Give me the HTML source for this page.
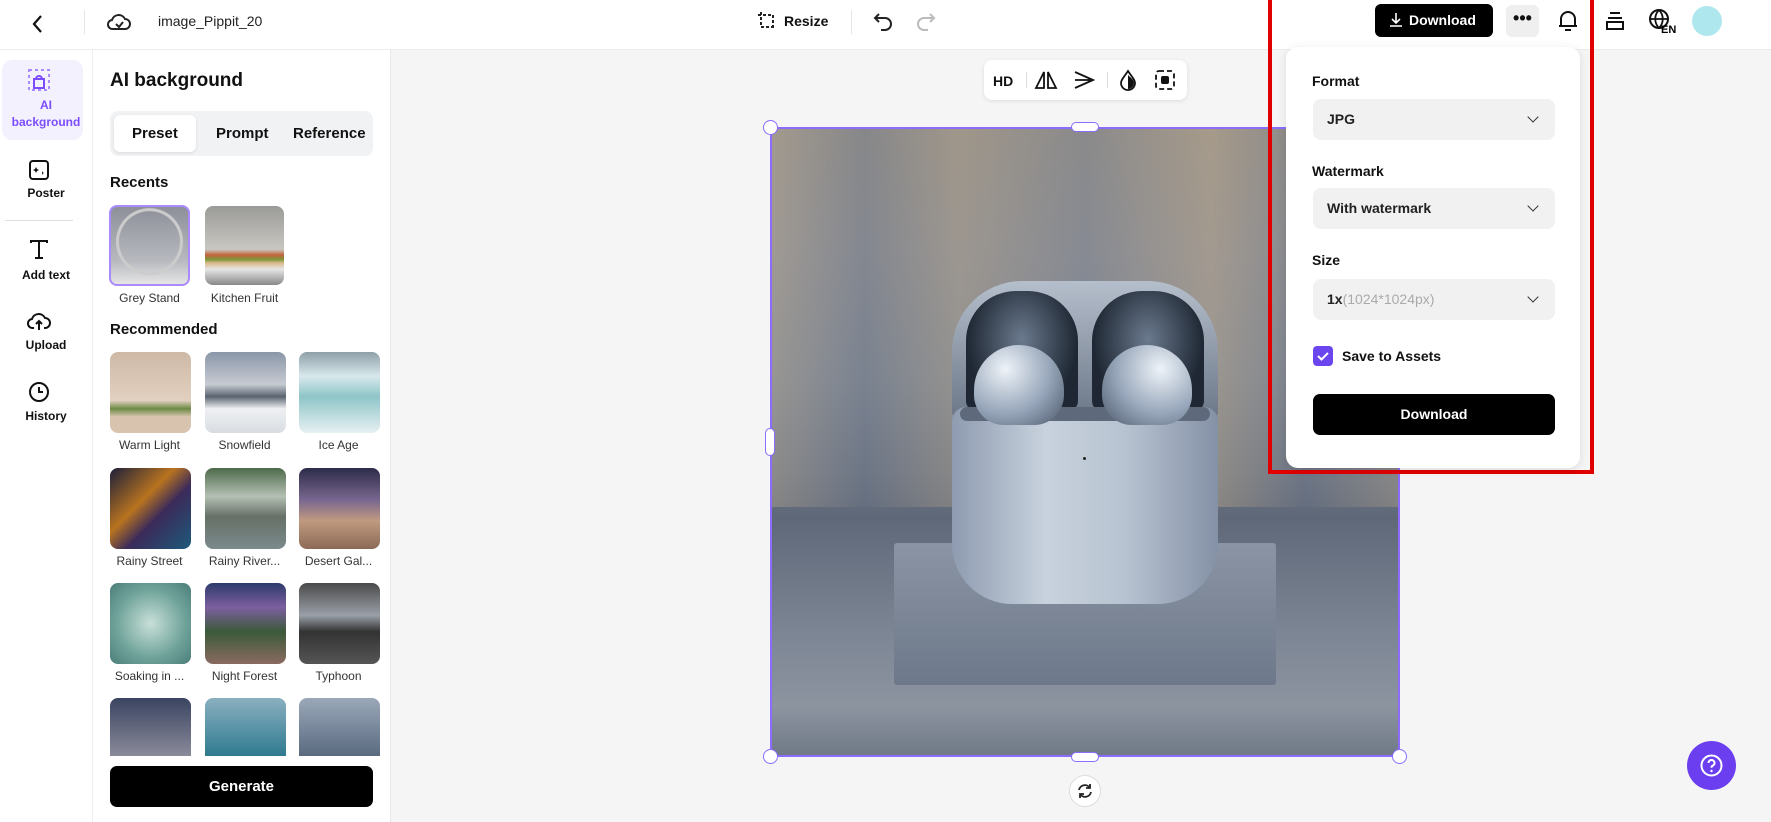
<!DOCTYPE html>
<html><head><meta charset="utf-8"><style>
*{box-sizing:border-box;margin:0;padding:0}
body{width:1771px;height:822px;overflow:hidden;background:#f5f5f5;font-family:"Liberation Sans",Arial,sans-serif;color:#111;position:relative}
.abs{position:absolute}
.top{left:0;top:0;width:1771px;height:50px;background:#fff;border-bottom:1px solid #ececec}
.nav{left:0;top:50px;width:92px;height:772px;background:#fff}
.panel{left:92px;top:50px;width:299px;height:772px;background:#fff;border-left:1px solid #eee;border-right:1px solid #e8e8e8}
.navitem{position:absolute;left:0;width:92px;text-align:center;font-size:12px;font-weight:bold}
.th{position:absolute;width:81px;height:81px;border-radius:8px}
.lbl{position:absolute;width:95px;text-align:center;font-size:12px;color:#333}
.sel{position:absolute;left:1313px;width:242px;height:41px;background:#f1f1f1;border-radius:8px;font-size:14px;padding:12px 14px;font-weight:bold;color:#222}
.sel:after{content:"";position:absolute;right:18px;top:14px;width:7px;height:7px;border-right:1.6px solid #333;border-bottom:1.6px solid #333;transform:rotate(45deg)}
.flab{position:absolute;left:1312px;font-size:14px;font-weight:bold}
</style></head><body>
<div class="abs top"></div>
<svg class="abs" style="left:28px;top:12px" width="20" height="24"><path d="M13 4 L6 12 L13 20" fill="none" stroke="#111" stroke-width="2.2"/></svg>
<div class="abs" style="left:84px;top:10px;width:1px;height:24px;background:#e5e5e5"></div>
<svg class="abs" style="left:106px;top:10px" width="26" height="24"><path d="M7 19 h12 a5 5 0 0 0 0-10 a7 7 0 0 0-13 1 a4.5 4.5 0 0 0 1 9z" fill="none" stroke="#222" stroke-width="2"/><path d="M10 14 l3 3 l4-5" fill="none" stroke="#222" stroke-width="2"/></svg>
<div class="abs" style="left:158px;top:13px;font-size:14px;color:#222">image_Pippit_20</div>
<svg class="abs" style="left:756px;top:10px" width="22" height="22"><path d="M5 2v15h15M2 5h15v15" fill="none" stroke="#222" stroke-width="2" stroke-dasharray="3 2"/></svg>
<div class="abs" style="left:784px;top:13px;font-size:14px;font-weight:bold">Resize</div>
<div class="abs" style="left:851px;top:10px;width:1px;height:24px;background:#e5e5e5"></div>
<svg class="abs" style="left:873px;top:10px" width="22" height="22"><path d="M6 4 L2 8 L6 12 M2 8 h10 a6 6 0 0 1 0 12 h-4" fill="none" stroke="#222" stroke-width="2"/></svg>
<svg class="abs" style="left:914px;top:10px" width="22" height="22"><path d="M16 4 L20 8 L16 12 M20 8 h-10 a6 6 0 0 0 0 12 h4" fill="none" stroke="#bbb" stroke-width="2"/></svg>
<div class="abs" style="left:1375px;top:4px;width:118px;height:33px;background:#000;border-radius:6px;color:#fff;font-size:14px;font-weight:bold;padding:8px 0 0 34px">Download</div>
<svg class="abs" style="left:1388px;top:11px" width="16" height="18"><path d="M8 2v10M4 8l4 4 4-4M2 15h12" fill="none" stroke="#fff" stroke-width="1.6"/></svg>
<div class="abs" style="left:1506px;top:5px;width:33px;height:32px;background:#efefef;border-radius:6px;font-size:18px;font-weight:bold;text-align:center;line-height:26px">•••</div>
<svg class="abs" style="left:1556px;top:8px" width="24" height="26"><path d="M5 18 V11 a7 7 0 0 1 14 0 V18 H3 h18 M9 22 h6" fill="none" stroke="#111" stroke-width="2"/></svg>
<svg class="abs" style="left:1604px;top:10px" width="22" height="22"><path d="M6 3h10M4 8h14M3 12h16v7H3z" fill="none" stroke="#111" stroke-width="2"/></svg>
<svg class="abs" style="left:1648px;top:8px" width="34" height="26"><circle cx="11" cy="11" r="9" fill="none" stroke="#111" stroke-width="2"/><path d="M2 11h18M11 2c-5 5-5 13 0 18M11 2c5 5 5 13 0 18" fill="none" stroke="#111" stroke-width="1.8"/><text x="13" y="25" font-size="11" font-weight="bold" font-family="Liberation Sans">EN</text></svg>
<div class="abs" style="left:1692px;top:6px;width:30px;height:30px;border-radius:50%;background:#aee8ee"></div>

<div class="abs nav"></div>
<div class="abs" style="left:2px;top:60px;width:81px;height:80px;background:#f4f1ff;border-radius:10px"></div>
<svg class="abs" style="left:27px;top:68px" width="24" height="24"><rect x="2" y="2" width="20" height="20" fill="none" stroke="#a98bff" stroke-width="2" stroke-dasharray="3 3"/><path d="M7 20 V11 h10 v9z M9 11 a3 3 0 0 1 6 0" fill="none" stroke="#7c4dff" stroke-width="2"/></svg>
<div class="navitem" style="top:97px;color:#7c4dff;line-height:17px">AI<br>background</div>
<svg class="abs" style="left:27px;top:158px" width="24" height="24"><rect x="3" y="3" width="18" height="18" rx="3" fill="none" stroke="#111" stroke-width="2"/><path d="M9 9l1 2 2 1-2 1-1 2-1-2-2-1 2-1z M15 13l.7 1.3 1.3.7-1.3.7-.7 1.3" fill="#111"/></svg>
<div class="navitem" style="top:186px">Poster</div>
<div class="abs" style="left:5px;top:220px;width:68px;height:1px;background:#ddd"></div>
<svg class="abs" style="left:28px;top:238px" width="22" height="22"><path d="M3 5V3h16v2M11 3v17M7 20h8" fill="none" stroke="#111" stroke-width="2"/></svg>
<div class="navitem" style="top:268px">Add text</div>
<svg class="abs" style="left:26px;top:309px" width="26" height="24"><path d="M8 19 h-1 a4.5 4.5 0 0 1-1-9 a7 7 0 0 1 13-1 a5 5 0 0 1 0 10 h-1 M13 21 v-9 M10 15l3-3 3 3" fill="none" stroke="#111" stroke-width="2"/></svg>
<div class="navitem" style="top:338px">Upload</div>
<svg class="abs" style="left:27px;top:380px" width="24" height="24"><circle cx="12" cy="12" r="9" fill="none" stroke="#111" stroke-width="2"/><path d="M12 7v5h4" fill="none" stroke="#111" stroke-width="2"/></svg>
<div class="navitem" style="top:409px">History</div>

<div class="abs panel"></div>
<div class="abs" style="left:110px;top:70px;font-size:19px;font-weight:bold">AI background</div>
<div class="abs" style="left:110px;top:111px;width:263px;height:45px;background:#f1f2f4;border-radius:8px"></div>
<div class="abs" style="left:114px;top:115px;width:82px;height:37px;background:#fff;border-radius:6px;box-shadow:0 1px 3px rgba(0,0,0,.1)"></div>
<div class="abs" style="left:132px;top:125px;font-size:15px;font-weight:bold">Preset</div>
<div class="abs" style="left:216px;top:125px;font-size:15px;font-weight:bold">Prompt</div>
<div class="abs" style="left:293px;top:125px;font-size:15px;font-weight:bold">Reference</div>
<div class="abs" style="left:110px;top:174px;font-size:15px;font-weight:bold">Recents</div>
<div class="th" style="left:109px;top:205px;border:2px solid #a98bff;background:radial-gradient(circle at 50% 45%,transparent 30px,#ccc 31px,#ccc 33px,transparent 34px),linear-gradient(#8d9099,#b7b9bf 70%,#e5e5e5)"></div>
<div class="th" style="left:205px;top:206px;width:79px;height:79px;background:linear-gradient(#9a9a98 0,#c9c7c1 55%,#c0643a 62%,#7a9a3a 68%,#d9b98c 72%,#e6e6e6 80%,#888)"></div>
<div class="lbl" style="left:102px;top:291px">Grey Stand</div>
<div class="lbl" style="left:197px;top:291px">Kitchen Fruit</div>
<div class="abs" style="left:110px;top:321px;font-size:15px;font-weight:bold">Recommended</div>

<div class="th" style="left:110px;top:352px;background:linear-gradient(#cdb9a6,#e2d0c0 60%,#6c8a45 70%,#d8c4ae 80%)"></div>
<div class="th" style="left:205px;top:352px;background:linear-gradient(#8a96a8,#c7cbd2 40%,#5a6470 55%,#eef0f2 70%,#d9dde2)"></div>
<div class="th" style="left:299px;top:352px;background:linear-gradient(#8fa0a8,#d8e8ec 30%,#8ec5c8 55%,#e8f0f2)"></div>
<div class="lbl" style="left:102px;top:438px">Warm Light</div>
<div class="lbl" style="left:197px;top:438px">Snowfield</div>
<div class="lbl" style="left:291px;top:438px">Ice Age</div>

<div class="th" style="left:110px;top:468px;background:linear-gradient(135deg,#1b1f3a,#b8731f 40%,#3b2a5a 60%,#1d5a7a)"></div>
<div class="th" style="left:205px;top:468px;background:linear-gradient(#4d6a4a,#b5c0b5 35%,#667066 60%,#7b8a8c)"></div>
<div class="th" style="left:299px;top:468px;background:linear-gradient(#2d2b4a,#7a6890 40%,#c09a80 65%,#8b6a55)"></div>
<div class="lbl" style="left:102px;top:554px">Rainy Street</div>
<div class="lbl" style="left:197px;top:554px">Rainy River...</div>
<div class="lbl" style="left:291px;top:554px">Desert Gal...</div>

<div class="th" style="left:110px;top:583px;background:radial-gradient(circle,#c8e0d8,#6fa39a 60%,#4a7d78)"></div>
<div class="th" style="left:205px;top:583px;background:linear-gradient(#2d3a6a,#7c5fa0 30%,#3b5a3a 60%,#8a6a60)"></div>
<div class="th" style="left:299px;top:583px;background:linear-gradient(#4a4a4a,#9aa0a8 40%,#333 60%,#555)"></div>
<div class="lbl" style="left:102px;top:669px">Soaking in ...</div>
<div class="lbl" style="left:197px;top:669px">Night Forest</div>
<div class="lbl" style="left:291px;top:669px">Typhoon</div>

<div class="th" style="left:110px;top:698px;height:58px;border-radius:8px 8px 0 0;background:linear-gradient(#3a4460,#8a8a9a)"></div>
<div class="th" style="left:205px;top:698px;height:58px;border-radius:8px 8px 0 0;background:linear-gradient(#8ab0c0,#2f7a90)"></div>
<div class="th" style="left:299px;top:698px;height:58px;border-radius:8px 8px 0 0;background:linear-gradient(#9aa8b8,#5a6a80)"></div>
<div class="abs" style="left:110px;top:766px;width:263px;height:41px;background:#000;border-radius:7px;color:#fff;font-size:15px;font-weight:bold;text-align:center;line-height:41px">Generate</div>

<!-- canvas toolbar -->
<div class="abs" style="left:984px;top:60px;width:203px;height:40px;background:#fff;border-radius:8px;box-shadow:0 1px 5px rgba(0,0,0,.1)"></div>
<div class="abs" style="left:993px;top:73px;font-size:14px;font-weight:bold">HD</div>
<div class="abs" style="left:1026px;top:72px;width:1px;height:16px;background:#ddd"></div>
<svg class="abs" style="left:1034px;top:70px" width="24" height="20"><path d="M10 2 L2 18 H10z M14 2 L22 18 H14z" fill="none" stroke="#111" stroke-width="1.8"/></svg>
<svg class="abs" style="left:1073px;top:70px" width="22" height="20"><path d="M2 2 L20 10 L2 18 M2 10 H20" fill="none" stroke="#111" stroke-width="1.8"/></svg>
<div class="abs" style="left:1107px;top:72px;width:1px;height:16px;background:#ddd"></div>
<svg class="abs" style="left:1117px;top:69px" width="22" height="22"><path d="M11 2 C7 8 4 11 4 14 a7 7 0 0 0 14 0 C18 11 15 8 11 2z" fill="none" stroke="#111" stroke-width="1.8"/><path d="M11 6 V20 a6 6 0 0 0 6-6 C17 11 14 9 11 6z" fill="#111"/></svg>
<svg class="abs" style="left:1154px;top:69px" width="22" height="22"><rect x="2" y="2" width="18" height="18" rx="3" fill="none" stroke="#111" stroke-width="1.8" stroke-dasharray="5 3"/><rect x="7" y="7" width="8" height="8" rx="2" fill="#111"/></svg>

<!-- image -->
<div class="abs" style="left:770px;top:127px;width:630px;height:630px;overflow:hidden;background:linear-gradient(#8f8c88 0,#8a8c92 20%,#7e8692 40%,#6c7584 55%,#5f6878 62%,#7c8594 80%,#8c94a0 92%,#6f7886 100%)">
 <div class="abs" style="left:0;top:0;width:630px;height:380px;background:linear-gradient(90deg,rgba(200,180,150,.35),rgba(110,120,140,.25) 15%,rgba(190,170,140,.35) 30%,rgba(120,130,150,.2) 50%,rgba(200,175,140,.4) 70%,rgba(110,120,140,.2) 85%,rgba(190,170,140,.35))"></div>
 <div class="abs" style="left:124px;top:416px;width:382px;height:142px;background:linear-gradient(#8a94a4,#6d788a);border-radius:3px"></div>
 <div class="abs" style="left:182px;top:154px;width:266px;height:140px;border-radius:70px 70px 10px 10px;background:linear-gradient(#b5bfcc,#6a7586)"></div>
 <div class="abs" style="left:196px;top:164px;width:112px;height:120px;border-radius:50px 50px 10px 10px;background:radial-gradient(ellipse at 50% 40%,#6b7a8e,#1e2733 70%)"></div>
 <div class="abs" style="left:322px;top:164px;width:112px;height:120px;border-radius:50px 50px 10px 10px;background:radial-gradient(ellipse at 50% 40%,#6b7a8e,#1e2733 70%)"></div>
 <div class="abs" style="left:182px;top:280px;width:266px;height:197px;border-radius:14px 14px 60px 60px;background:linear-gradient(90deg,#8e9bb0,#c8d2de 35%,#b8c3d1 65%,#8491a6)"></div>
 <div class="abs" style="left:190px;top:280px;width:250px;height:14px;border-radius:8px;background:#5e6a7c"></div>
 <div class="abs" style="left:204px;top:218px;width:90px;height:80px;border-radius:45px 45px 30px 30px;background:radial-gradient(circle at 35% 30%,#eef3f8,#97a6ba 55%,#4c586a)"></div>
 <div class="abs" style="left:332px;top:218px;width:90px;height:80px;border-radius:45px 45px 30px 30px;background:radial-gradient(circle at 65% 30%,#eef3f8,#97a6ba 55%,#4c586a)"></div>
 <div class="abs" style="left:313px;top:330px;width:3px;height:3px;border-radius:50%;background:#222"></div>
</div>
<div class="abs" style="left:770px;top:127px;width:630px;height:630px;border:2px solid #8b6cff"></div>
<div class="abs" style="left:763px;top:120px;width:15px;height:15px;border-radius:50%;background:#fff;border:1.5px solid #8b6cff"></div>
<div class="abs" style="left:763px;top:749px;width:15px;height:15px;border-radius:50%;background:#fff;border:1.5px solid #8b6cff"></div>
<div class="abs" style="left:1392px;top:749px;width:15px;height:15px;border-radius:50%;background:#fff;border:1.5px solid #8b6cff"></div>
<div class="abs" style="left:1071px;top:122px;width:28px;height:10px;border-radius:5px;background:#fff;border:1.5px solid #8b6cff"></div>
<div class="abs" style="left:1071px;top:752px;width:28px;height:10px;border-radius:5px;background:#fff;border:1.5px solid #8b6cff"></div>
<div class="abs" style="left:765px;top:428px;width:10px;height:28px;border-radius:5px;background:#fff;border:1.5px solid #8b6cff"></div>
<div class="abs" style="left:1069px;top:775px;width:32px;height:32px;border-radius:50%;background:#fff;border:1px solid #ddd"></div>
<svg class="abs" style="left:1076px;top:782px" width="18" height="18"><path d="M3 8 a6 6 0 0 1 11-2 M15 10 a6 6 0 0 1-11 2 M14 2v4h-4 M4 16v-4h4" fill="none" stroke="#222" stroke-width="1.8"/></svg>
<div class="abs" style="left:1687px;top:741px;width:49px;height:49px;border-radius:50%;background:#6b3ff0"></div>
<svg class="abs" style="left:1699px;top:753px" width="25" height="25"><circle cx="12.5" cy="12.5" r="10" fill="none" stroke="#fff" stroke-width="2"/><path d="M9.5 10 a3 3 0 1 1 4 2.8 c-1 .4-1 1-1 2" fill="none" stroke="#fff" stroke-width="2"/><circle cx="12.5" cy="18" r="1.2" fill="#fff"/></svg>

<!-- download panel -->
<div class="abs" style="left:1268px;top:-4px;width:326px;height:478px;border:4px solid #e00000"></div>
<div class="abs" style="left:1286px;top:47px;width:294px;height:421px;background:#fff;border-radius:12px;box-shadow:0 2px 10px rgba(0,0,0,.1)"></div>
<div class="flab" style="top:73px">Format</div>
<div class="sel" style="top:99px">JPG</div>
<div class="flab" style="top:163px">Watermark</div>
<div class="sel" style="top:188px">With watermark</div>
<div class="flab" style="top:252px">Size</div>
<div class="sel" style="top:279px">1x<span style="color:#aaa;font-weight:normal">(1024*1024px)</span></div>
<div class="abs" style="left:1313px;top:346px;width:20px;height:20px;border-radius:4px;background:#6b45ee"></div>
<svg class="abs" style="left:1313px;top:346px" width="20" height="20"><path d="M5 10l3.5 3.5L15 7" fill="none" stroke="#fff" stroke-width="2"/></svg>
<div class="abs" style="left:1342px;top:348px;font-size:14px;font-weight:bold">Save to Assets</div>
<div class="abs" style="left:1313px;top:394px;width:242px;height:41px;background:#000;border-radius:7px;color:#fff;font-size:14px;font-weight:bold;text-align:center;line-height:41px">Download</div>
</body></html>
